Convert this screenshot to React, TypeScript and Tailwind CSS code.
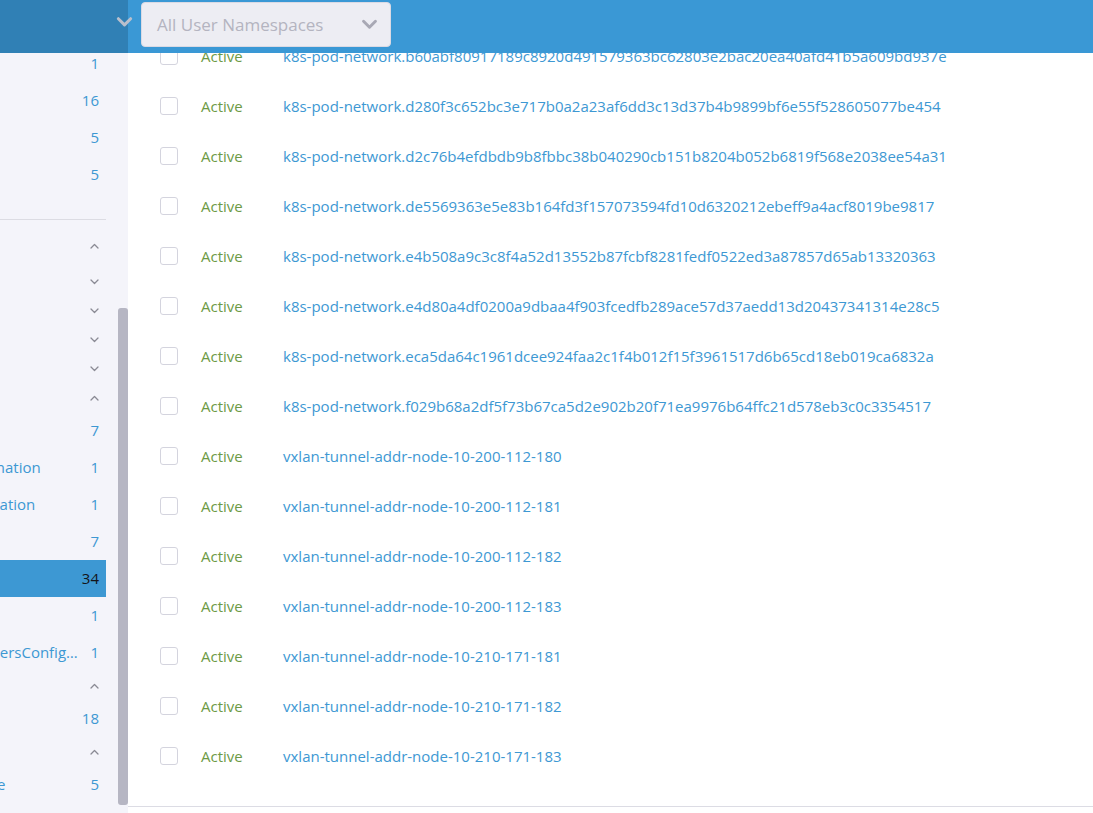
import React from 'react';

type NavRow =
    | { kind: 'item'; label: string; count: number; selected?: boolean }
    | { kind: 'group'; label: string; open: boolean; height: string }
    | { kind: 'divider' }
    | { kind: 'spacer'; height: string };

const navRows: NavRow[] = [
    { kind: 'item', label: 'Nodes', count: 1 },
    { kind: 'item', label: 'Pods', count: 16 },
    { kind: 'item', label: 'Secrets', count: 5 },
    { kind: 'item', label: 'Services', count: 5 },
    { kind: 'divider' },
    { kind: 'group', label: 'Workload', open: true, height: 'h-[29px]' },
    { kind: 'spacer', height: 'h-[7px]' },
    { kind: 'group', label: 'Apps', open: false, height: 'h-[29px]' },
    { kind: 'group', label: 'Service', open: false, height: 'h-[29px]' },
    { kind: 'group', label: 'Storage', open: false, height: 'h-[29px]' },
    { kind: 'group', label: 'Policy', open: false, height: 'h-[29px]' },
    { kind: 'group', label: 'Calico', open: true, height: 'h-[29px]' },
    { kind: 'item', label: 'BlockAffinity', count: 7 },
    { kind: 'item', label: 'ClusterInformation', count: 1 },
    { kind: 'item', label: 'FelixConfiguration', count: 1 },
    { kind: 'item', label: 'IPAMBlock', count: 7 },
    { kind: 'item', label: 'IPAMHandle', count: 34, selected: true },
    { kind: 'item', label: 'IPPool', count: 1 },
    { kind: 'item', label: 'KubeControllersConfiguration', count: 1 },
    { kind: 'group', label: 'Events', open: true, height: 'h-[29px]' },
    { kind: 'item', label: 'Event', count: 18 },
    { kind: 'group', label: 'Traefik', open: true, height: 'h-[29px]' },
    { kind: 'item', label: 'TraefikService', count: 5 },
];

const handles = [
    'k8s-pod-network.b60abf80917189c8920d491579363bc62803e2bac20ea40afd41b5a609bd937e',
    'k8s-pod-network.d280f3c652bc3e717b0a2a23af6dd3c13d37b4b9899bf6e55f528605077be454',
    'k8s-pod-network.d2c76b4efdbdb9b8fbbc38b040290cb151b8204b052b6819f568e2038ee54a31',
    'k8s-pod-network.de5569363e5e83b164fd3f157073594fd10d6320212ebeff9a4acf8019be9817',
    'k8s-pod-network.e4b508a9c3c8f4a52d13552b87fcbf8281fedf0522ed3a87857d65ab13320363',
    'k8s-pod-network.e4d80a4df0200a9dbaa4f903fcedfb289ace57d37aedd13d20437341314e28c5',
    'k8s-pod-network.eca5da64c1961dcee924faa2c1f4b012f15f3961517d6b65cd18eb019ca6832a',
    'k8s-pod-network.f029b68a2df5f73b67ca5d2e902b20f71ea9976b64ffc21d578eb3c0c3354517',
    'vxlan-tunnel-addr-node-10-200-112-180',
    'vxlan-tunnel-addr-node-10-200-112-181',
    'vxlan-tunnel-addr-node-10-200-112-182',
    'vxlan-tunnel-addr-node-10-200-112-183',
    'vxlan-tunnel-addr-node-10-210-171-181',
    'vxlan-tunnel-addr-node-10-210-171-182',
    'vxlan-tunnel-addr-node-10-210-171-183',
];

function ChevronDown({ className }: { className?: string }) {
    return (
        <svg viewBox="0 0 18 12" className={className} fill="none">
            <path d="M2.5 2.5 L9 9 L15.5 2.5" stroke="currentColor" strokeWidth="3.2" strokeLinecap="round" strokeLinejoin="round" />
        </svg>
    );
}

function SmallChevron({ open }: { open: boolean }) {
    return (
        <svg viewBox="0 0 9 6" className="w-[9px] h-[6px] text-[#8a8a94]" fill="none">
            <path
                d={open ? 'M1 5 L4.5 1.5 L8 5' : 'M1 1 L4.5 4.5 L8 1'}
                stroke="currentColor"
                strokeWidth="1.3"
                strokeLinecap="round"
                strokeLinejoin="round"
            />
        </svg>
    );
}

function SideNav() {
    return (
        <div className="w-[128px] shrink-0 bg-[#f4f4fa] flex">
            {/* nav is scrolled: labels start left of the visible area */}
            <div className="w-[106px] overflow-hidden">
                <div className="w-[198px] -ml-[92px] -mt-[8px]">
                    {navRows.map((row, i) => {
                        if (row.kind === 'divider') {
                            return (
                                <div key={i} className="h-[38px] pt-[26px]">
                                    <div className="border-t border-[#dcdce3]" />
                                </div>
                            );
                        }
                        if (row.kind === 'spacer') {
                            return <div key={i} className={row.height} />;
                        }
                        if (row.kind === 'group') {
                            return (
                                <div key={i} className={`${row.height} flex items-center justify-between pr-[7px]`}>
                                    <span className="text-[14px] text-[#141419] -ml-[24px]">{row.label}</span>
                                    <SmallChevron open={row.open} />
                                </div>
                            );
                        }
                        return (
                            <div
                                key={i}
                                className={`h-[37px] flex items-center text-[15px] ${row.selected ? 'bg-[#3d98d3]' : ''}`}
                            >
                                <span className={`flex-1 min-w-0 truncate ${row.selected ? 'text-white' : 'text-[#3d98d3]'}`}>
                                    {row.label}
                                </span>
                                <span className={`shrink-0 pl-[8px] pr-[7px] text-right ${row.selected ? 'text-[#141419]' : 'text-[#3d98d3]'}`}>
                                    {row.count}
                                </span>
                            </div>
                        );
                    })}
                </div>
            </div>
            <div className="w-[12px]" />
            {/* scrollbar */}
            <div className="w-[10px] pt-[255px]">
                <div className="h-[497px] rounded-[3px] bg-[#b6b6c3]" />
            </div>
        </div>
    );
}

export default function App() {
    return (
        <div
            className="w-[1093px] h-[813px] overflow-hidden flex flex-col bg-white"
            style={{ fontFamily: '"Open Sans", sans-serif' }}
        >
            {/* Header */}
            <div className="h-[53px] shrink-0 flex">
                <div className="w-[128px] bg-[#3080b5] flex justify-end items-start pt-[16px]">
                    <ChevronDown className="relative z-10 w-[17px] h-[12px] -mr-[5px] text-[#b9bfcc]" />
                </div>
                <div className="flex-1 bg-[#3a98d5] pl-[13px] pt-[2px]">
                    <div className="w-[250px] h-[45px] rounded-[4px] bg-[#ededf3] border border-[#dadae4] flex items-center justify-between pl-[15px] pr-[12px]">
                        <span className="text-[17px] text-[#b4b4c0]">All User Namespaces</span>
                        <ChevronDown className="w-[17px] h-[11px] text-[#a8a8b4]" />
                    </div>
                </div>
            </div>

            <div className="flex-1 flex min-h-0">
                <SideNav />

                {/* Table body, scrolled */}
                <div className="flex-1 overflow-hidden">
                    <div className="-mt-[22px] pb-[25px] border-b border-[#dcdce4]">
                        {handles.map((name) => (
                            <div key={name} className="h-[50px] flex items-center text-[15px]">
                                <div className="w-[73px] pl-[32px]">
                                    <div className="w-[18px] h-[18px] rounded-[3px] border border-[#d4d4de] bg-white" />
                                </div>
                                <div className="w-[82px] text-[#6d9a45]">Active</div>
                                <a className="text-[#3d98d3] whitespace-nowrap">{name}</a>
                            </div>
                        ))}
                    </div>
                </div>
            </div>
        </div>
    );
}
